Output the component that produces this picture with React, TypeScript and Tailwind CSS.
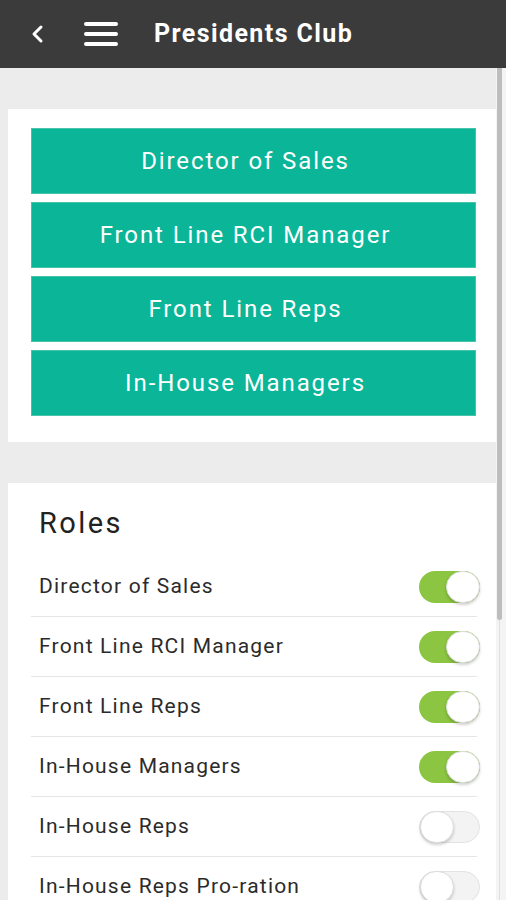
import React from 'react';

const groups = ['Director of Sales', 'Front Line RCI Manager', 'Front Line Reps', 'In-House Managers'];

const roles: { name: string; on: boolean }[] = [
  { name: 'Director of Sales', on: true },
  { name: 'Front Line RCI Manager', on: true },
  { name: 'Front Line Reps', on: true },
  { name: 'In-House Managers', on: true },
  { name: 'In-House Reps', on: false },
  { name: 'In-House Reps Pro-ration', on: false },
];

const Toggle: React.FC<{ on: boolean }> = ({ on }) => (
  <div
    className={
      on
        ? 'flex h-[32px] w-[61px] items-center justify-end rounded-full bg-[#8bc541]'
        : 'flex h-[32px] w-[61px] items-center justify-start rounded-full border border-[#e3e3e3] bg-[#f3f3f3]'
    }
  >
    <div className="h-[32px] w-[34px] rounded-full border border-[#dcdcdc] bg-white shadow-[0_2px_3px_rgba(0,0,0,0.18)]" />
  </div>
);

export default function App() {
  return (
    <div className="flex h-[900px] w-[506px] flex-col overflow-hidden bg-[#ececec] font-['Roboto',sans-serif]">
      {/* 상단 바 */}
      <header className="flex h-[68px] shrink-0 items-center bg-[#3b3b3b] text-white">
        <svg className="ml-[28px]" width="20" height="20" viewBox="0 0 20 20" fill="none">
          <path d="M13 3 L6 10 L13 17" stroke="white" strokeWidth="3" strokeLinecap="round" strokeLinejoin="round" />
        </svg>
        <svg className="ml-[36px]" width="34" height="26" viewBox="0 0 34 26" fill="none">
          <path d="M2 3 H32 M2 13 H32 M2 23 H32" stroke="white" strokeWidth="4" strokeLinecap="round" />
        </svg>
        <h1 className="ml-[36px] text-[25px] font-bold tracking-[1.4px]">Presidents Club</h1>
      </header>

      <div className="flex min-h-0 flex-1">
        <main className="flex flex-1 flex-col gap-[41px] pl-[8px] pt-[41px]">
          {/* 버튼 카드 */}
          <section className="flex flex-col gap-[8px] bg-white pb-[26px] pl-[23px] pr-[20px] pt-[19px]">
            {groups.map((g) => (
              <button
                key={g}
                className="flex h-[66px] items-center justify-center border border-[#45c4aa] bg-[#0bb597] pr-[16px] text-[24px] tracking-[1.9px] text-white"
              >
                {g}
              </button>
            ))}
          </section>

          {/* 역할 목록 */}
          <section className="bg-white pl-[23px] pr-[19px] pt-[20px]">
            <h2 className="pl-[8px] text-[29px] leading-[40px] tracking-[2.4px] text-[#222]">Roles</h2>
            <div className="mt-[13px] flex flex-col">
              {roles.map((r, i) => (
                <div
                  key={r.name}
                  className={
                    i === 0
                      ? 'flex h-[60px] items-center justify-between pl-[8px] pt-[1px]'
                      : 'flex h-[60px] items-center justify-between border-t border-[#e6e6e6] pl-[8px] pt-[1px]'
                  }
                >
                  <span className="text-[21px] tracking-[1.2px] text-[#2b2b2b]">{r.name}</span>
                  <div className="-mr-[3px]">
                    <Toggle on={r.on} />
                  </div>
                </div>
              ))}
            </div>
          </section>
        </main>

        {/* 스크롤바 */}
        <div className="flex w-[10px] shrink-0 flex-col bg-[#f4f4f4] pl-[1px] pr-[4px]">
          <div className="h-[552px] w-[5px] rounded-b-full bg-[#bdbdbd]" />
          <div className="mx-auto w-[1px] flex-1 bg-[#e0e0e0]" />
        </div>
      </div>
    </div>
  );
}
